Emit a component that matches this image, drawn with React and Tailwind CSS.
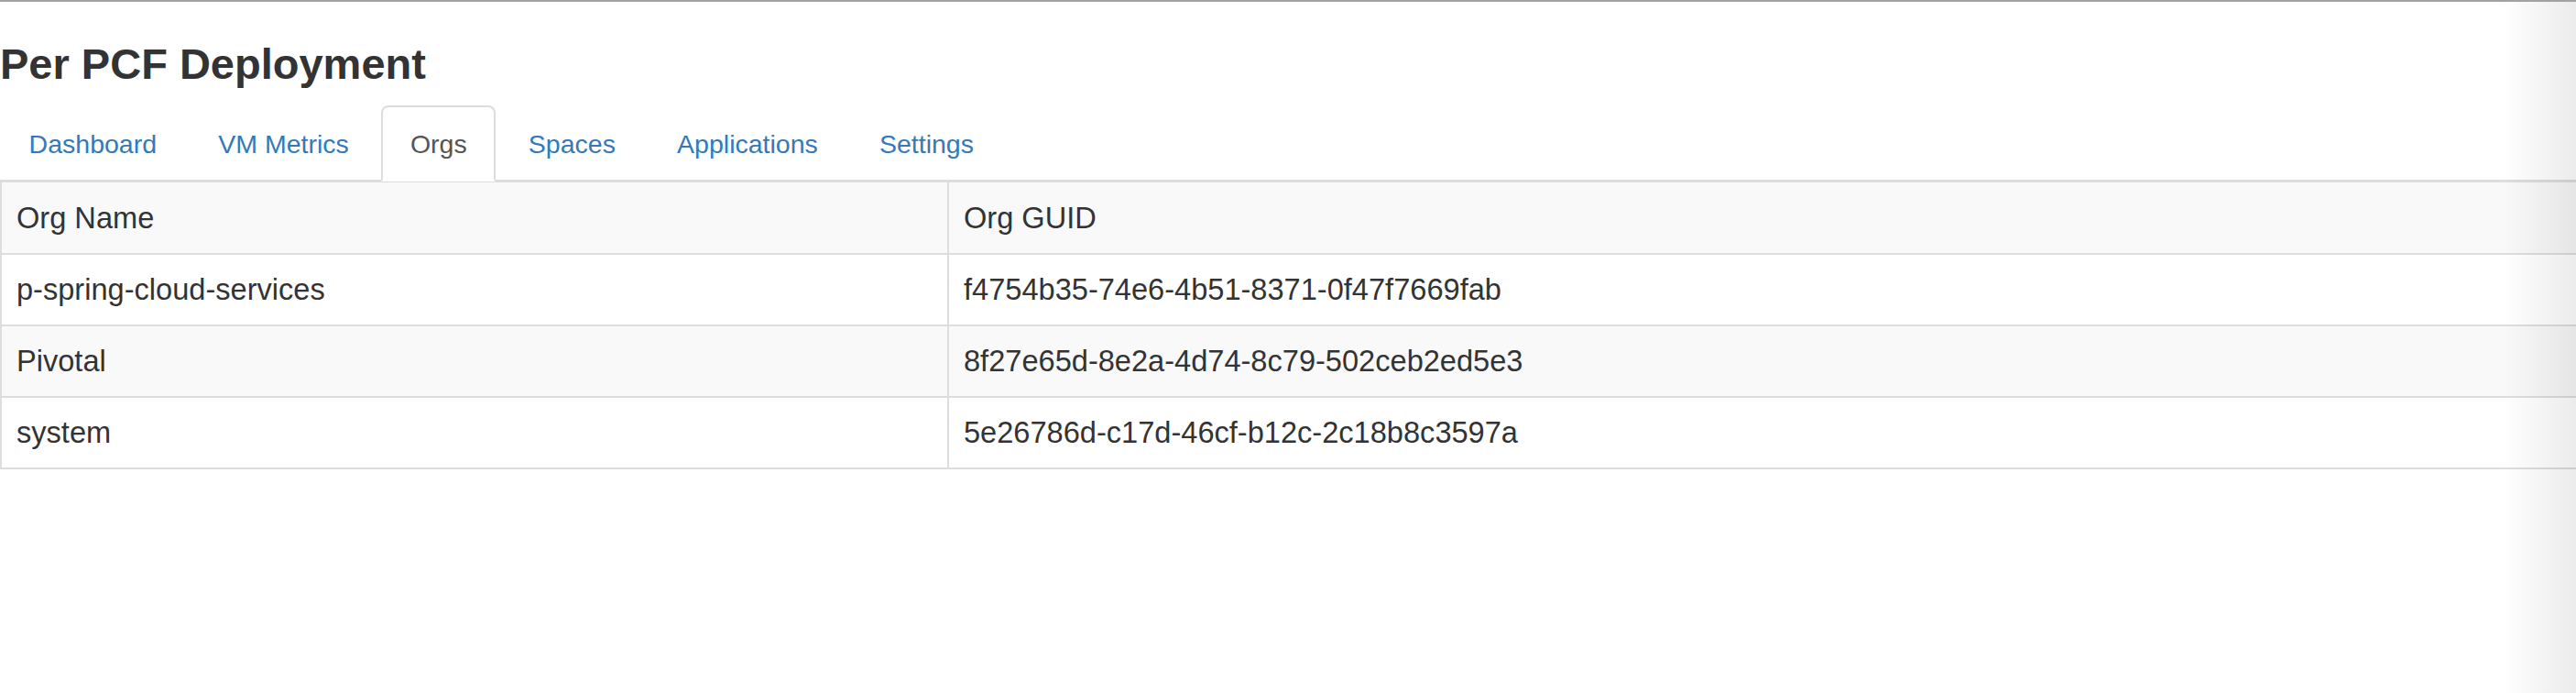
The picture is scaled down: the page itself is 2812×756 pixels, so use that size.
import React from "react";

const tabs = ["Dashboard", "VM Metrics", "Orgs", "Spaces", "Applications", "Settings"];

const orgs = [
  { name: "p-spring-cloud-services", guid: "f4754b35-74e6-4b51-8371-0f47f7669fab" },
  { name: "Pivotal", guid: "8f27e65d-8e2a-4d74-8c79-502ceb2ed5e3" },
  { name: "system", guid: "5e26786d-c17d-46cf-b12c-2c18b8c3597a" },
];

function Tab({ label, active }) {
  if (active) {
    return (
      <div className="mr-[4px] -mb-[2px] rounded-t-[8px] border-2 border-[#ddd] border-b-transparent bg-white px-[29.6px] pt-[20px] pb-[17px] text-[28.5px] leading-[40px] text-[#555]">
        {label}
      </div>
    );
  }
  return (
    <a href="#" className="mr-[4px] rounded-t-[8px] border-2 border-transparent px-[29.6px] pt-[20px] pb-[17px] text-[28.5px] leading-[40px] text-[#337ab7]">
      {label}
    </a>
  );
}

export default function App() {
  return (
    <div className="relative min-h-[756px] overflow-hidden border-t-2 border-[#a2a2a2] bg-white font-['Liberation_Sans',Arial,sans-serif] text-[#333]">
      <h2 className="mt-[42px] text-[47px] font-bold leading-[1.1] text-[#333]">Per PCF Deployment</h2>

      <nav className="mt-[19px] flex border-b-2 border-[#ddd]">
        {tabs.map((t) => (
          <Tab key={t} label={t} active={t === "Orgs"} />
        ))}
      </nav>

      <div className="border-t border-b-2 border-l-2 border-[#ddd] text-[32.6px] leading-[46px]">
        <div className="grid grid-cols-[1032px_1fr] bg-[#f9f9f9]">
          <div className="px-[16px] pt-[16px] pb-[15px]">Org Name</div>
          <div className="border-l-2 border-[#ddd] px-[16px] pt-[16px] pb-[15px]">Org GUID</div>
        </div>
        {orgs.map((o, i) => (
          <div
            key={o.guid}
            className={`grid grid-cols-[1032px_1fr] border-t-2 border-[#ddd] ${i % 2 === 1 ? "bg-[#f9f9f9]" : "bg-white"}`}
          >
            <div className="px-[16px] py-[15px]">{o.name}</div>
            <div className="border-l-2 border-[#ddd] px-[16px] py-[15px]">{o.guid}</div>
          </div>
        ))}
      </div>

      {/* faint shadow on the right edge of the window */}
      <div className="pointer-events-none absolute top-0 right-0 h-full w-[80px] bg-linear-to-l from-[rgba(0,0,0,0.08)] to-transparent" />
    </div>
  );
}
